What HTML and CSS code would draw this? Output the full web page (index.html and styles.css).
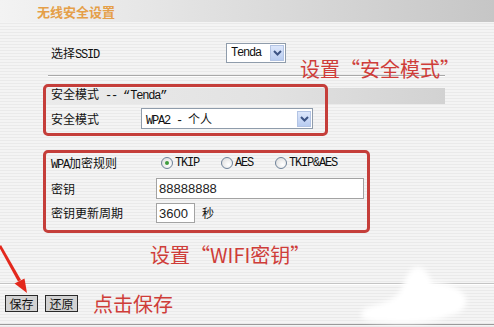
FILE: index.html
```html
<!DOCTYPE html>
<html lang="zh-CN">
<head>
<meta charset="utf-8">
<title>无线安全设置</title>
<link rel="stylesheet" href="styles.css">
</head>
<body>

<div class="head"><span class="head-title">无线安全设置</span></div>

<div class="form">
	<div class="row row-ssid">
		<span class="label">选择<span class="en">SSID</span></span>
		<div class="select select-ssid">
			<span class="en">Tenda</span>
			<span class="select-btn"><svg width="9" height="6" viewBox="0 0 9 6"><path d="M1 1 L4.5 4.5 L8 1" fill="none" stroke="#3d5484" stroke-width="2"/></svg></span>
		</div>
	</div>
	<div class="rule"></div>

	<div class="mark mark-mode">
		<div class="band">安全模式<span class="en"> -- </span>“<span class="en">Tenda</span>”</div>
		<div class="row row-mode">
			<span class="label">安全模式</span>
			<div class="select select-mode">
				<span><span class="en">WPA2 - </span>个人</span>
				<span class="select-btn"><svg width="9" height="6" viewBox="0 0 9 6"><path d="M1 1 L4.5 4.5 L8 1" fill="none" stroke="#3d5484" stroke-width="2"/></svg></span>
			</div>
		</div>
	</div>

	<div class="mark mark-key">
		<div class="row row-wpa">
			<span class="label"><span class="en">WPA</span>加密规则</span>
			<label class="radio radio-on"><span class="radio-dot"></span><span class="en">TKIP</span></label>
			<label class="radio"><span class="radio-dot"></span><span class="en">AES</span></label>
			<label class="radio"><span class="radio-dot"></span><span class="en">TKIP&amp;AES</span></label>
		</div>
		<div class="row row-key">
			<span class="label">密钥</span>
			<div class="input input-key">88888888</div>
		</div>
		<div class="row row-period">
			<span class="label">密钥更新周期</span>
			<div class="input input-period">3600</div>
			<span class="unit">秒</span>
		</div>
	</div>

	<div class="note note-wifi">设置“WIFI密钥”</div>
</div>

<div class="rule-full"></div>

<div class="actions">
	<span class="btn">保存</span>
	<span class="btn">还原</span>
	<span class="note note-save">点击保存</span>
</div>
<div class="bottom-line"></div>

<!-- 标注 -->
<div class="note note-mode">设置“安全模式”</div>

<svg class="arrow" width="40" height="60" viewBox="0 0 40 60">
	<polygon points="-1,4 1,2 21,37 18,38.5" fill="#e3281c"/>
	<polygon points="27,50 24.5,35.5 14.5,40.5" fill="#e3281c"/>
</svg>

<svg class="smudge" width="130" height="72" viewBox="0 0 130 72">
	<defs><filter id="blur"><feGaussianBlur stdDeviation="2.5"/></filter></defs>
	<path d="M62 10 C70 6 76 14 80 24 C94 25 110 30 114 40 C116 50 108 56 96 58 C80 66 44 66 20 63 C8 62 6 55 14 50 C26 46 38 44 46 36 C52 28 54 14 62 10 Z" fill="#fff" filter="url(#blur)"/>
</svg>

</body>
</html>
```

FILE: styles.css
```css
* {
	box-sizing: border-box;
}
html, body {
	margin: 0;
	padding: 0;
}

body {
	width: 494px;
	height: 327px;
	position: relative;
	overflow: hidden;
	background: repeating-linear-gradient(to bottom, #f4f4f4 0, #f4f4f4 2px, #eaeaea 2px, #eaeaea 3px);
	font-size: 12px;
	font-family: "Liberation Mono", "Noto Sans CJK SC", monospace;
	color: #111;
}

.en { letter-spacing: -1.2px; }

.head {
	height: 22px;
	padding-left: 37px;
	display: flex;
	align-items: center;
	background: linear-gradient(to right, #f3f3f3, #e6e6e6 30%, #c6c6c6);
}
.head-title {
	color: #e59f48;
	font-size: 13px;
	font-weight: bold;
	font-family: "Noto Sans CJK SC", sans-serif;
}

.form { padding-left: 43px; }

.row { display: flex; align-items: center; }
.label { padding-left: 8px; flex-shrink: 0; white-space: nowrap; }

.row-ssid { margin-top: 21px; height: 20px; }
.row-ssid .label { width: 183px; }

.select {
	height: 20px;
	display: flex;
	align-items: center;
	justify-content: space-between;
	padding: 0 1px 0 4px;
	background: #fff;
	border: 1px solid #8f9cab;
	white-space: pre;
}
.select-ssid { width: 60px; }
.select-btn {
	width: 14px;
	height: 16px;
	display: flex;
	align-items: center;
	justify-content: center;
	background: linear-gradient(#dde7fb, #b8ccf0);
	border: 1px solid #b3c4e4;
}

.rule {
	width: 397px;
	height: 2px;
	margin: 12px 0 0 5px;
	border-top: 1px solid #a9a9a9;
	border-bottom: 1px solid #fff;
}

/* 红框标注 */
.mark { position: relative; }
.mark::after {
	content: "";
	position: absolute;
	top: 0; left: 0; right: 0; bottom: 0;
	border: 3px solid #c53e3a;
	border-radius: 5px;
	pointer-events: none;
}

.mark-mode { width: 285px; height: 52px; margin-top: 7px; padding-top: 4px; }
.band {
	width: 399px;
	height: 16px;
	margin-left: 3px;
	padding-left: 5px;
	line-height: 16px;
	white-space: pre;
	background: linear-gradient(to right, #ebebeb, #e2e2e2 55%, #d2d2d2);
}
.row-mode { margin-top: 4px; height: 21px; }
.row-mode .label { width: 98px; }
.select-mode { width: 172px; height: 21px; }

.mark-key { width: 327px; height: 83px; margin-top: 14px; padding-top: 4px; }
.row-wpa { height: 18px; }
.row-wpa .label { width: 118px; }
.radio {
	display: flex;
	align-items: center;
	gap: 2px;
	margin-right: 22px;
}
.radio-dot {
	width: 12px;
	height: 12px;
	border-radius: 50%;
	border: 1px solid #6d8198;
	background: radial-gradient(circle at 65% 65%, #fff, #d9d9d9);
	display: flex;
	align-items: center;
	justify-content: center;
}
.radio-on .radio-dot::after {
	content: "";
	width: 4px;
	height: 4px;
	border-radius: 50%;
	background: #3e9c3e;
}

.row-key { margin-top: 6px; height: 21px; }
.row-key .label { width: 113px; }
.row-period { margin-top: 4px; height: 20px; }
.row-period .label { width: 113px; }

.input {
	height: 100%;
	padding-left: 2px;
	display: flex;
	align-items: center;
	background: #fff;
	border: 1px solid #a3a3a3;
	font-family: "Liberation Sans", sans-serif;
	font-size: 13px;
	color: #222;
}
.input-key { width: 208px; }
.input-period { width: 39px; }
.unit { margin-left: 7px; }

.note {
	color: #cf3d39;
	font-family: "Noto Sans CJK SC", sans-serif;
	font-size: 20px;
	line-height: 22px;
	white-space: nowrap;
}
.note-wifi { margin-top: 11px; padding-left: 107px; }
.note-mode { position: absolute; left: 300px; top: 58px; }

.rule-full {
	height: 2px;
	margin-top: 17px;
	border-top: 1px solid #c4c4c4;
	border-bottom: 1px solid #fff;
}

.actions {
	height: 17px;
	margin-top: 10px;
	padding-left: 5px;
	display: flex;
	align-items: center;
	gap: 7px;
}
.btn {
	width: 33px;
	height: 17px;
	display: flex;
	align-items: center;
	justify-content: center;
	background: #d2d2d2;
	border: 1px solid #2a2a2a;
	font-family: "Noto Sans CJK SC", sans-serif;
	font-size: 12px;
}
.note-save { margin-left: 8px; }

.bottom-line {
	height: 1px;
	margin-top: 12px;
	background: #9a9a9a;
}

.arrow { position: absolute; left: 0; top: 243px; }
.smudge { position: absolute; left: 352px; top: 258px; }
```
